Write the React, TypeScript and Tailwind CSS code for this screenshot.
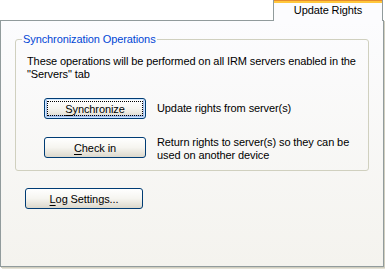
import React from 'react'

function XpButton({ label, hotkey, width, isDefault }: { label: string; hotkey: number; width: string; isDefault?: boolean }) {
  const before = label.slice(0, hotkey)
  const key = label.charAt(hotkey)
  const after = label.slice(hotkey + 1)
  return (
    <button
      className={`${width} h-[21px] shrink-0 rounded-[3px] border border-[#003c74] bg-gradient-to-b from-white via-[#f6f5f0] to-[#dcd8cc] p-[2px] text-black ${
        isDefault ? 'shadow-[inset_0_0_0_1px_#cee7ff,inset_0_-1px_0_2px_#a8c0ec]' : ''
      }`}
    >
      <span
        className={`flex h-full w-full items-center justify-center pt-px leading-none ${
          isDefault ? 'border border-dotted border-black' : 'border border-transparent'
        }`}
      >
        {before}
        <span className="underline underline-offset-2">{key}</span>
        {after}
      </span>
    </button>
  )
}

export default function App() {
  return (
    <div className="h-[269px] w-[385px] bg-white font-['Liberation_Sans',Arial,sans-serif] text-[11px] leading-[13px] tracking-[-0.1px] text-black">
      {/* tab strip */}
      <div className="relative z-10 flex h-[21px] justify-end pr-[2px]">
        <div className="flex w-[110px] flex-col border-l border-r border-[#919b9c] bg-[#fcfcfe]">
          <div className="h-[1px] bg-[#e68b2c]" />
          <div className="h-[2px] bg-[#ffc73c]" />
          <div className="flex flex-1 items-center justify-center pb-[3px]">Update Rights</div>
        </div>
      </div>

      {/* pane */}
      <div className="-mt-px h-[247px] w-[384px] border border-[#919b9c] bg-gradient-to-b from-[#fcfcfe] to-[#f4f3ee] shadow-[1px_1px_0_#d0cebf,2px_2px_0_#e4e2d6]">
        <fieldset className="ml-[14px] mr-[14px] mt-[12px] rounded-[3px] border border-[#d0d0bf] px-[11px] pb-[8px]">
          <legend className="ml-[-5px] px-[1px] text-[#0046d5]">Synchronization Operations</legend>
          <p className="mt-[9px] whitespace-nowrap">
            These operations will be performed on all IRM servers enabled in the
            <br />
            "Servers" tab
          </p>
          <div className="ml-[17px] mt-[17px] flex items-center gap-[11px]">
            <XpButton label="Synchronize" hotkey={0} width="w-[102px]" isDefault />
            <span className="whitespace-nowrap">Update rights from server(s)</span>
          </div>
          <div className="ml-[17px] mt-[18px] flex items-start gap-[11px]">
            <XpButton label="Check in" hotkey={0} width="w-[102px]" />
            <span className="-mt-px whitespace-nowrap">
              Return rights to server(s) so they can be
              <br />
              used on another device
            </span>
          </div>
        </fieldset>
        <div className="ml-[24px] mt-[17px]">
          <XpButton label="Log Settings..." hotkey={0} width="w-[118px]" />
        </div>
      </div>
    </div>
  )
}
